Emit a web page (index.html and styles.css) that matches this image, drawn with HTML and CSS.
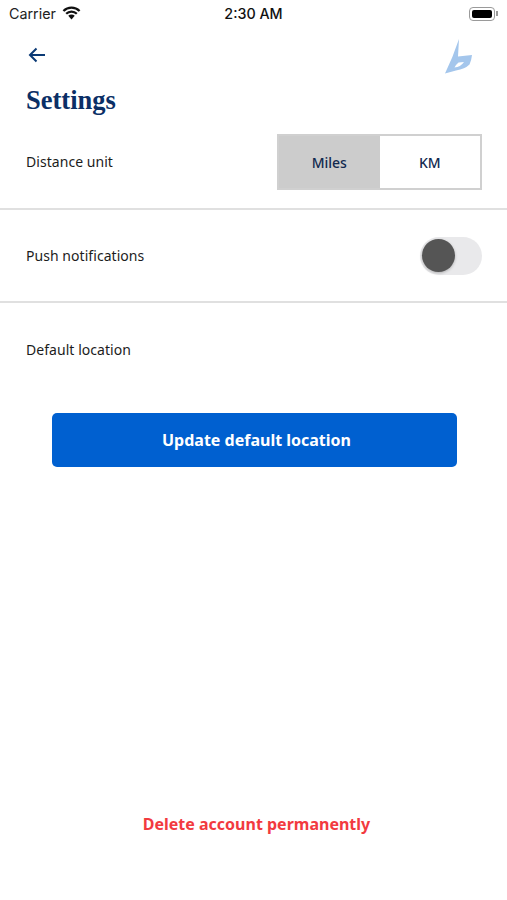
FILE: index.html
```html
<!doctype html>
<html lang="en">
<head>
  <meta charset="utf-8">
  <title>Settings</title>
  <link rel="stylesheet" href="styles.css">
</head>
<body>
<div class="screen">
  <div class="statusBar">
    <div class="statusBar__left">
      <span>Carrier</span>
      <svg class="wifi" width="19" height="14" viewBox="0 0 20 14">
        <path d="M10 13.8 L6.6 10 A4.8 4.8 0 0 1 13.4 10 Z" fill="#111"/>
        <path d="M4.4 7.8 A8 8 0 0 1 15.6 7.8" fill="none" stroke="#111" stroke-width="2.4"/>
        <path d="M1.5 4.9 A12.2 12.2 0 0 1 18.5 4.9" fill="none" stroke="#111" stroke-width="2.4"/>
      </svg>
    </div>
    <div class="statusBar__time">2:30 AM</div>
    <div class="battery">
      <div class="battery__body"><div class="battery__level"></div></div>
      <div class="battery__tip"></div>
    </div>
  </div>

  <div class="header">
    <svg class="backArrow" width="18" height="16" viewBox="0 0 18 16">
      <path d="M17 8 H2 M8.5 1.5 L2 8 L8.5 14.5" fill="none" stroke="#0b3a75" stroke-width="2"/>
    </svg>
    <svg class="logo" width="28" height="36" viewBox="0 0 28 36">
      <path fill-rule="evenodd" fill="#a4c6ec" d="M15 0 L14 17.5 L28 16 Q27.5 21 25.5 25.5 Q21 30 12 31.5 L1 34.5 Q9 18 15 0 Z M10.5 28.5 Q16.5 28 20 23 L14.5 23.5 Q12 25.5 10.5 28.5 Z"/>
    </svg>
  </div>

  <h1 class="title">Settings</h1>

  <div class="row row--unit">
    <div class="row__label">Distance unit</div>
    <div class="segment">
      <div class="segment__item segment__item--active">Miles</div>
      <div class="segment__item">KM</div>
    </div>
  </div>

  <div class="row row--push">
    <div class="row__label">Push notifications</div>
    <div class="toggle"><div class="toggle__knob"></div></div>
  </div>

  <div class="row row--location">
    <div class="row__label">Default location</div>
  </div>

  <button type="button" class="button">Update default location</button>

  <div class="deleteLink">Delete account permanently</div>
</div>
</body>
</html>
```
FILE: styles.css
```css
body {
  margin: 0;
  background-color: #ffffff;
  font-family: "Noto Sans", "Open Sans", Arial, sans-serif;
  overflow: hidden;
}

.screen {
  display: flex;
  flex-direction: column;
  height: 900px;
}

.statusBar {
  display: flex;
  align-items: center;
  justify-content: space-between;
  height: 27px;
  padding: 0 9px 1px;
  font-family: "Inter", "Liberation Sans", sans-serif;
  font-size: 14.3px;
  color: #222222;
}

.statusBar__left {
  display: flex;
  align-items: center;
  gap: 6px;
  width: 90px;
}

.wifi {
  margin-top: -2px;
}

.statusBar__time {
  font-weight: 500;
  color: #111111;
}

.battery {
  display: flex;
  align-items: center;
  justify-content: flex-end;
  width: 90px;
}

.battery__body {
  box-sizing: border-box;
  width: 26px;
  height: 14px;
  padding: 2px;
  border: 1px solid #9a9a9a;
  border-radius: 4px;
}

.battery__level {
  height: 100%;
  background-color: #000000;
  border-radius: 2px;
}

.battery__tip {
  width: 2px;
  height: 5px;
  margin-left: 1px;
  background-color: #9a9a9a;
}

.header {
  display: flex;
  justify-content: space-between;
  height: 50px;
  padding: 11px 35px 0 28px;
  box-sizing: border-box;
}

.backArrow {
  margin-top: 8px;
}

.title {
  margin: 5px 0 17px 26px;
  height: 34px;
  font-family: "Liberation Serif", serif;
  font-size: 26.5px;
  line-height: 34px;
  font-weight: 700;
  color: #0b2f66;
}

.row {
  display: flex;
  align-items: center;
  justify-content: space-between;
  box-sizing: border-box;
  padding: 0 25px 0 26px;
}

.row--unit,
.row--push {
  border-bottom: 2px solid #e0e0e0;
}

.row--unit {
  height: 76px;
  padding-bottom: 18px;
}

.row--push {
  height: 93px;
  padding-top: 1px;
}

.row--location {
  height: 95px;
}

.row__label {
  padding-bottom: 2px;
  font-size: 14px;
  letter-spacing: 0.05px;
  color: #1c1c1c;
}

.segment {
  display: flex;
  box-sizing: border-box;
  width: 205px;
  height: 56px;
  border: 2px solid #d0d0d0;
}

.segment__item {
  display: flex;
  align-items: center;
  justify-content: center;
  flex: 1;
  font-size: 14px;
  font-weight: 500;
  letter-spacing: -0.1px;
  color: #12294f;
}

.segment__item--active {
  background-color: #cccccc;
}

.toggle {
  position: relative;
  width: 62px;
  height: 38px;
  border-radius: 19px;
  background-color: #e9e9eb;
}

.toggle__knob {
  position: absolute;
  top: 2px;
  left: 2px;
  width: 33px;
  height: 33px;
  border-radius: 50%;
  background-color: #555555;
  box-shadow: 0 1px 3px rgba(0, 0, 0, 0.25);
}

.button {
  align-self: flex-start;
  width: 405px;
  height: 54px;
  margin: 15px 0 0 52px;
  padding: 0 0 0 4px;
  border: none;
  border-radius: 5px;
  background-color: #0060d0;
  color: #ffffff;
  font-family: inherit;
  font-size: 16px;
  font-weight: 700;
}

.deleteLink {
  margin-top: 346px;
  padding-left: 6px;
  text-align: center;
  font-size: 16px;
  font-weight: 700;
  color: #f23a3f;
}
```
